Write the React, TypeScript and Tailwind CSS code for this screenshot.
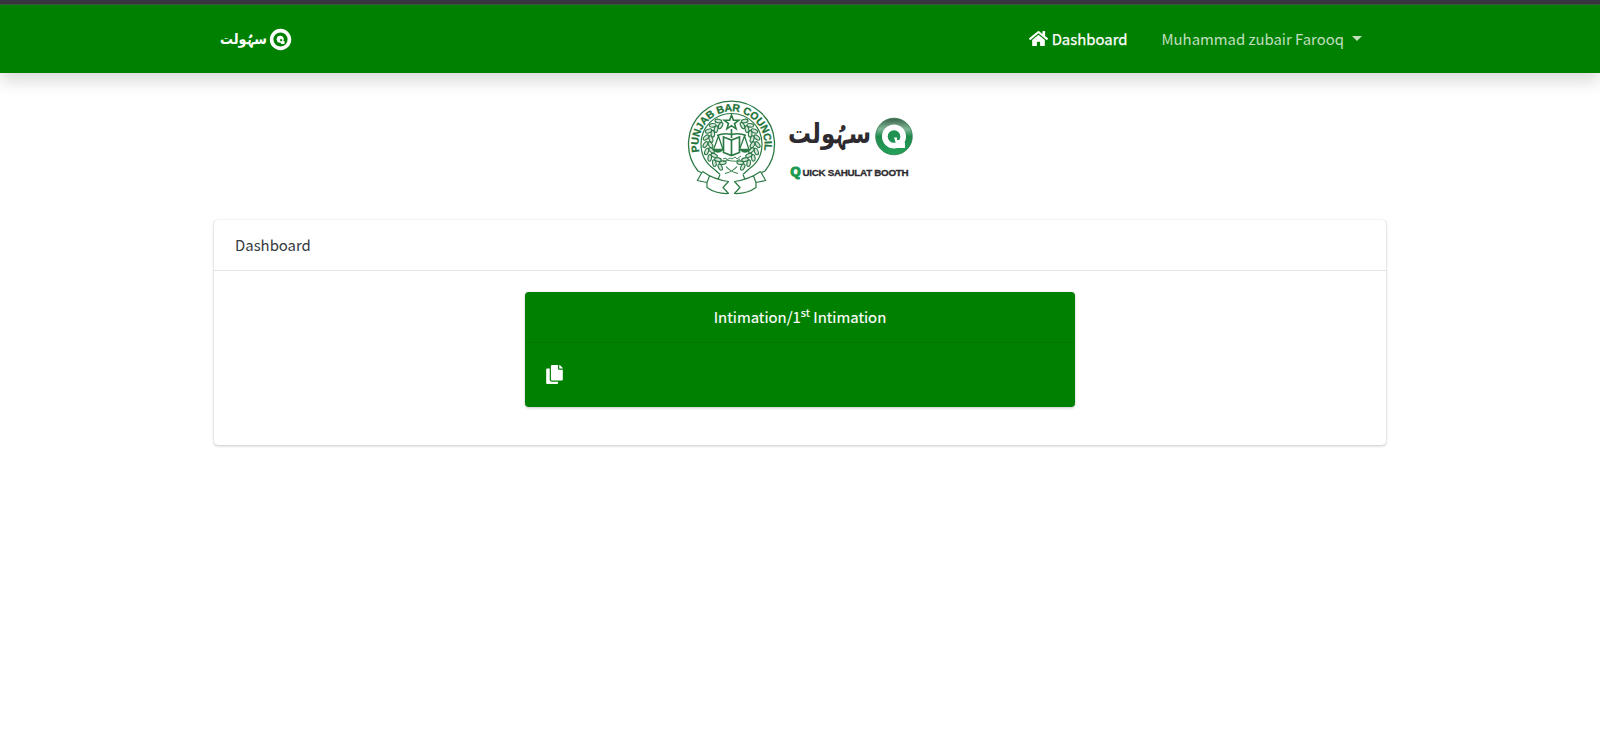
import { FaHome, FaCopy } from "react-icons/fa";

const leaves = Array.from({ length: 9 }, (_, i) => i);

function Ribbon() {
  return (
    <g strokeWidth="1.2" strokeLinejoin="round">
      <path fill="#fff" d="M15.500 69.500L10.300 80.500L20 82.500V87.500Q29 94 41.500 93.500L36 87.500L41.500 81.500Q36 81 31 79L33 74.500Q22 70.500 15.500 69.500z" stroke="none" />
      <path d="M15.500 71.500L10.300 80.500L20 82.500V87.500Q29 94 41.500 93.500L36 87.500L41.500 81.500Q27 79.500 15.500 71.500M20 82.500L22.500 76M33 74.500L31 79.500" />
    </g>
  );
}

function Seal() {
  return (
    <svg width="90" height="96" viewBox="0 0 90 96" fill="none" stroke="#2c7a45">
      <defs>
        <path id="ring" d="M12.600 52.800 A33 33 0 1 1 76.400 52.800" />
      </defs>
      <path d="M33 74.500Q20 76 11 71A43 43 0 1 1 78 71Q69 76 56 74.500" strokeWidth="1.3" />
      <path d="M27 69Q14 60 14 44A30.500 30.500 0 1 1 75 44Q75 60 62 69" strokeWidth="1.2" />
      <path d="M27 69L33 74.500M62 69L56 74.500" strokeWidth="1.2" />
      <text fill="#1d7438" stroke="#1d7438" strokeWidth=".3" fontFamily="Liberation Sans, Arial, sans-serif" fontWeight="700" fontSize="10.500">
        <textPath href="#ring" startOffset="1" textLength="117" lengthAdjust="spacing">PUNJAB BAR COUNCIL</textPath>
      </text>
      <g strokeWidth="1.100" fill="#2c7a4533">
        {leaves.map((i) => (
          <g key={i}>
            <g transform={`rotate(${-150 + i * 15.5} 44.500 43.500)`}>
              <ellipse cx="42.500" cy="17.500" rx="3.400" ry="1.800" transform="rotate(35 42.500 17.500)" />
              <ellipse cx="42.500" cy="22.500" rx="3.400" ry="1.800" transform="rotate(-35 42.500 22.500)" />
            </g>
            <g transform={`rotate(${150 - i * 15.5} 44.500 43.500)`}>
              <ellipse cx="46.500" cy="17.500" rx="3.400" ry="1.800" transform="rotate(-35 46.500 17.500)" />
              <ellipse cx="46.500" cy="22.500" rx="3.400" ry="1.800" transform="rotate(35 46.500 22.500)" />
            </g>
          </g>
        ))}
      </g>
      <path strokeWidth="1.600" fill="#fff" d="M44.500 15l1.900 5.200h5.400l-4.300 3.300 1.600 5.300-4.600-3.100-4.600 3.100 1.600-5.300-4.300-3.300h5.400z" />
      <path strokeWidth="1.600" d="M44.500 29v9M30 35.500q7-3 14.500-1q7.500-2 14.500 1" />
      <path strokeWidth="1.700" fill="#fff" d="M36.500 37l8 3 8-3v15.500l-8 3-8-3zM44.500 40v15" />
      <path strokeWidth="1.300" fill="#fff" d="M31.500 36l-5 13.500h9.500zM57.500 36l-5 13.500h9.500z" />
      <path fill="#2c7a45" strokeWidth=".5" d="M25.500 49.500h11q-5.500 6-11 0zM52.500 49.500h11q-5.500 6-11 0z" />
      <path strokeWidth=".9" d="M36 59l3-1 1 2 3-2 2 1 3-2 2 2 4-3M36 61.500q5-2 9-.5t8-2" />
      <path strokeWidth="1.100" d="M38 73.500q8-2 12-7M51 73.500q-8-2-12-7" />
      <Ribbon />
      <g transform="translate(89 0) scale(-1 1)">
        <Ribbon />
      </g>
    </svg>
  );
}

function SahulatLogo() {
  return (
    <svg width="130" height="66" viewBox="0 0 130 66">
      <defs>
        <linearGradient id="ball" x1="0" y1="0" x2="0" y2="1">
          <stop offset="0" stopColor="#3c5f4a" />
          <stop offset=".3" stopColor="#7fb896" />
          <stop offset=".5" stopColor="#1f8a4b" />
          <stop offset="1" stopColor="#25a35a" />
        </linearGradient>
      </defs>
      <text x="1" y="28" direction="ltr" textLength="83" lengthAdjust="spacingAndGlyphs" fontFamily="DejaVu Sans, sans-serif" fontWeight="700" fontSize="28" fill="#2d2b30">سہُولت</text>
      <circle cx="107" cy="21.500" r="18.300" fill="url(#ball)" stroke="#2b7a4c" strokeWidth=".8" />
      <circle cx="107" cy="21.500" r="12" fill="#fff" />
      <path d="M108 27.500h10v5.500h-10z" fill="#fff" />
      <circle cx="107" cy="21.500" r="6.300" fill="#1f9150" />
      <path d="M107 22.500h3v2.500h3v3.500h-4z" fill="#fff" />
      <text y="60.500" fontFamily="Liberation Sans, Arial, sans-serif" fontWeight="700">
        <tspan x="3.500" fontSize="13" fill="#1a9a50" stroke="#1a9a50" strokeWidth="1.200">Q</tspan>
      </text>
      <text x="15.500" y="60.500" fontSize="9.800" textLength="106" lengthAdjust="spacing" fontFamily="Liberation Sans, Arial, sans-serif" fontWeight="700" fill="#2d2b30" stroke="#2d2b30" strokeWidth=".3">UICK SAHULAT BOOTH</text>
    </svg>
  );
}

function BrandMark() {
  return (
    <svg width="74" height="24" viewBox="0 0 74 24" fill="#fff">
      <text x="1" y="16.500" direction="ltr" textLength="47" lengthAdjust="spacingAndGlyphs" fontFamily="DejaVu Sans, sans-serif" fontWeight="700" fontSize="15">سہُولت</text>
      <circle cx="61.500" cy="12.500" r="8.900" fill="none" stroke="#fff" strokeWidth="3.600" />
      <circle cx="61.200" cy="12.200" r="3.500" />
      <path d="M62 14h3.500v3H62z" />
      <path d="M61.200 12.200h2v2h-2z" fill="#008000" />
    </svg>
  );
}

export default function App() {
  return (
    <div className="min-h-[729px] bg-white font-['Noto_Sans_CJK_JP',sans-serif] text-[14.9px] leading-6 text-[#343a40]">
      <div className="h-[5px] border-b border-[#3c5b3c] bg-[#38373f]" />
      <nav className="h-[68px] bg-[#008000] shadow-[0_8px_16px_rgba(0,0,0,0.15)]">
        <div className="mx-auto flex h-full w-[1174px] items-center justify-between pr-[25px] pb-px pl-[6px]">
          <BrandMark />
          <div className="flex items-center">
            <a className="flex items-center gap-1 text-white [-webkit-text-stroke:0.25px_white]">
              <FaHome className="size-[19px]" />
              Dashboard
            </a>
            <a className="ml-[34px] flex items-center text-[#ffffffbf]">
              Muhammad zubair Farooq
              <span className="mb-px ml-2 border-x-[5px] border-t-[5px] border-x-transparent border-t-current" />
            </a>
          </div>
        </div>
      </nav>
      <main className="mx-auto w-[1172px]">
        <div className="flex h-[147px] justify-center gap-[10px] pt-[26.5px] pl-[4px]">
          <Seal />
          <div className="pt-[15.5px]">
            <SahulatLogo />
          </div>
        </div>
        <section className="h-[225px] rounded-[4px] shadow-[0_0_1px_rgba(0,0,0,0.2),0_1px_3px_rgba(0,0,0,0.2)]">
          <header className="flex h-[51px] items-center border-b border-[#e3e3e3] px-[21px]">Dashboard</header>
          <div className="flex justify-center pt-[21px]">
            <article className="h-[115px] w-[550px] rounded-[4px] bg-[#008000] text-white shadow-[0_0_1px_rgba(0,0,0,0.13),0_1px_3px_rgba(0,0,0,0.2)]">
              <h2 className="h-[51px] border-b border-[#007500] pt-[13px] text-center [-webkit-text-stroke:0.15px_white]">
                Intimation/1<sup className="top-[-0.5em] text-[75%]">st</sup> Intimation
              </h2>
              <div className="px-[20.5px] pt-[22px]">
                <FaCopy className="h-[19px] w-[17px]" />
              </div>
            </article>
          </div>
        </section>
      </main>
    </div>
  );
}
